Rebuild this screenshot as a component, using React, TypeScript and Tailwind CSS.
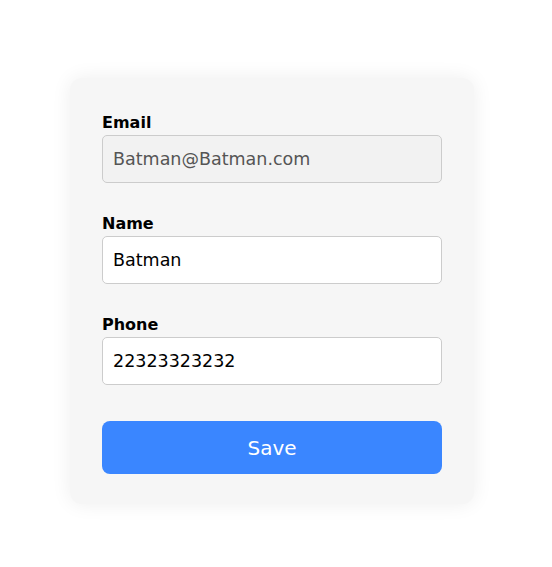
export default function App() {
  return (
    <div className="min-h-screen bg-white pt-[78px] font-['DejaVu_Sans',sans-serif]">
      <div className="ml-[70px] w-[404px] rounded-xl bg-[#f6f6f6] px-8 pt-8 pb-[30px] shadow-[0_0_20px_rgba(0,0,0,0.07)]">
        <form onSubmit={e => e.preventDefault()}>
          {/* Email (read-only) */}
          <div className="mb-[28px]">
            <label className="block h-[25px] text-[16px] leading-[25px] font-bold text-black">Email</label>
            <input
              readOnly
              value="Batman@Batman.com"
              className="block h-12 w-full rounded-[5px] border border-[#cccccc] bg-[#f2f2f2] px-[10px] text-[17.5px] text-[#555555] outline-none"
            />
          </div>
          <div className="mb-[28px]">
            <label className="block h-[25px] text-[16px] leading-[25px] font-bold text-black">Name</label>
            <input
              defaultValue="Batman"
              className="block h-12 w-full rounded-[5px] border border-[#cccccc] bg-white px-[10px] text-[17.5px] text-black outline-none"
            />
          </div>
          <div className="mb-9">
            <label className="block h-[25px] text-[16px] leading-[25px] font-bold text-black">Phone</label>
            <input
              defaultValue="22323323232"
              className="block h-12 w-full rounded-[5px] border border-[#cccccc] bg-white px-[10px] text-[17.5px] text-black outline-none"
            />
          </div>
          <button
            type="submit"
            className="block h-[53px] w-full rounded-lg bg-[#3a86ff] text-[20px] text-white"
          >
            Save
          </button>
        </form>
      </div>
    </div>
  )
}
